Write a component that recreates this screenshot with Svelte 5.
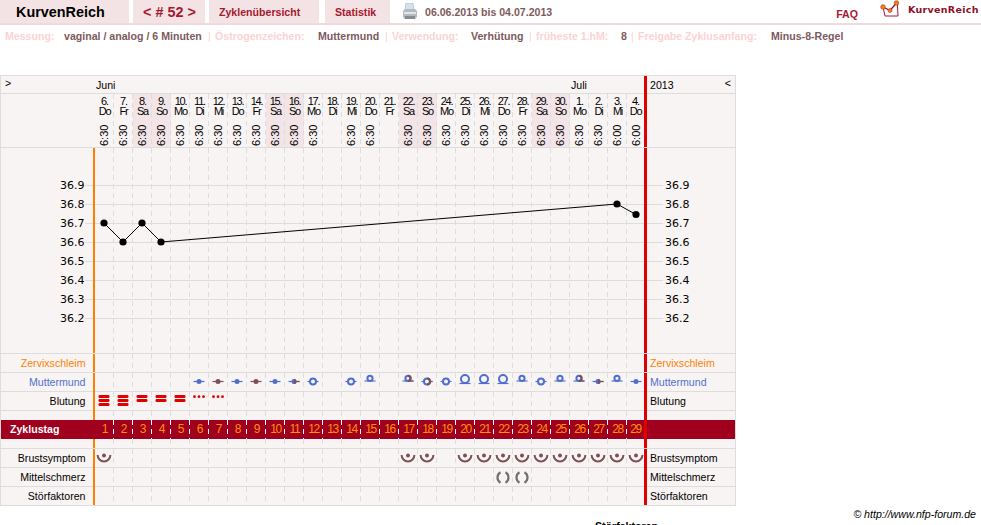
<script>
  const names = ['Do', 'Fr', 'Sa', 'So', 'Mo', 'Di', 'Mi'];
  const blood = { 1: 3, 2: 3, 3: 2, 4: 2, 5: 2, 6: 'dots', 7: 'dots' };
  const cervix = {
    6: ['dot', 0], 7: ['dot', 2], 8: ['dot', 0], 9: ['dot', 2], 10: ['dot', 0], 11: ['dot', 1], 12: ['low', 0],
    14: ['low', 0], 15: ['high', 0], 17: ['high', 1], 18: ['low', 1], 19: ['low', 0], 20: ['big', 0], 21: ['big', 0],
    22: ['big', 0], 23: ['high', 0], 24: ['low', 0], 25: ['high', 0], 26: ['high', 1], 27: ['dot', 1], 28: ['high', 0], 29: ['dot', 0]
  };
  const breast = [1, 17, 18, 20, 21, 22, 23, 24, 25, 26, 27, 28, 29];
  const pain = [22, 23];
  const noTime = [13, 16];
  const temps = [36.9, 36.8, 36.7, 36.6, 36.5, 36.4, 36.3, 36.2];
  const points = [[104, 223], [123, 242], [142, 223], [161, 242], [617, 204], [636, 214.5]];
  const settings = [
    { key: 'Messung:', keyWidth: 59, val: 'vaginal / analog / 6 Minuten', valWidth: 144 },
    { key: 'Östrogenzeichen:', keyWidth: 103, val: 'Muttermund', valWidth: 67 },
    { key: 'Verwendung:', keyWidth: 79, val: 'Verhütung', valWidth: 58 },
    { key: 'früheste 1.hM:', keyWidth: 85, val: '8', valWidth: 10 },
    { key: 'Freigabe Zyklusanfang:', keyWidth: 133, val: 'Minus-8-Regel', valWidth: 80 }
  ];

  const days = Array.from({ length: 29 }, (_, i) => {
    const date = i < 25 ? i + 6 : i - 24;
    return {
      n: i + 1,
      date,
      name: names[i % 7],
      weekend: i % 7 === 2 || i % 7 === 3,
      time: noTime.includes(i + 1) ? '' : i > 26 ? '6:00' : '6:30'
    };
  });
</script>

{#snippet cervixMark(kind, tone)}
  {@const cy = kind === 'dot' || kind === 'low' ? 8.5 : kind === 'big' ? 6 : 5.3}
  {@const ly = kind === 'dot' || kind === 'low' ? 8.5 : kind === 'big' ? 10.5 : 8}
  {@const r = kind === 'big' ? 4 : kind === 'low' ? 3 : 2.6}
  <svg class="mark" viewBox="0 0 19 19">
    <line x1="3.5" x2="14.5" y1={ly} y2={ly} class={tone === 2 ? 'ln brown' : 'ln blue'} />
    {#if tone === 1}
      <line x1="9" x2="14.5" y1={ly} y2={ly} class="ln brown" />
    {/if}
    {#if kind === 'dot'}
      <circle cx="9" cy={cy} r="2.5" class={tone === 2 ? 'solid brown' : 'solid blue'} />
    {:else}
      <circle cx="9" {cy} {r} class="ring" />
    {/if}
    {#if tone === 1}
      {#if kind === 'dot'}
        <path d="M9 6a2.5 2.5 0 0 1 0 5z" class="solid brown" />
      {:else}
        <path d="M9 {cy - r}a{r} {r} 0 0 1 0 {r * 2}" class="half" />
      {/if}
    {/if}
  </svg>
{/snippet}

<div class="page">
  <nav class="nav">
    <div class="tab title">KurvenReich</div>
    <div class="tab cycle">&lt; # 52 &gt;</div>
    <div class="tab overview">Zyklenübersicht</div>
    <div class="tab stats">Statistik</div>
    <svg class="printer" viewBox="0 0 14 17">
      <path d="M3 0h7l1 7H2z" fill="#d3e2ee" stroke="#9db2c2" stroke-width=".6" />
      <path d="M0 8l2-2h10l2 2v6l-2 2H2l-2-2z" fill="#b4babe" />
      <path d="M1 9h12v2H1z" fill="#e2e5e7" />
      <path d="M2 13h10v3H2z" fill="#868d91" />
    </svg>
    <span class="range">06.06.2013 bis 04.07.2013</span>
    <span class="faq">FAQ</span>
    <div class="brand">
      <svg class="logo" viewBox="0 0 22 20">
        <path d="M3 7l2 9h13l-.6-12" fill="none" stroke="#b0153a" stroke-width="1" />
        <path d="M3 7l7 3.5L16.500 3" fill="none" stroke="#8f0f2a" stroke-width="1.300" />
        <circle cx="3" cy="7" r="2.300" fill="#f0850a" stroke="#a5302a" stroke-width=".6" />
        <circle cx="10" cy="10.500" r="2" fill="#f0850a" stroke="#a5302a" stroke-width=".6" />
        <circle cx="16.500" cy="3" r="2.300" fill="#f0850a" stroke="#a5302a" stroke-width=".6" />
      </svg>
      <span>KurvenReich</span>
    </div>
  </nav>

  <div class="meta">
    {#each settings as s, i}
      <span class="key" style="width: {s.keyWidth}px">{s.key}</span>
      <span class="val" style="width: {s.valWidth}px">{s.val}</span>
      {#if i < settings.length - 1}<span class="sep">|</span>{/if}
    {/each}
  </div>

  <div class="chart">
    <div class="row months">
      <div class="label toggle">&gt;</div>
      <div class="month-names"><span>Juni</span><span>Juli</span></div>
      <div class="label side year"><span>2013</span><span class="toggle-r">&lt;</span></div>
    </div>

    <div class="row dates">
      <div class="label"></div>
      <div class="cells">
        {#each days as d}
          <div class="cell date-cell" class:weekend={d.weekend}>
            <div class="day">{d.date}.<br />{d.name}</div>
            {#if d.time}<div class="time">{d.time}</div>{/if}
          </div>
        {/each}
      </div>
      <div class="label side"></div>
    </div>

    <div class="row plot">
      <svg width="734" height="205" viewBox="1 148 734 205">
        {#each temps as t, i}
          <line x1="85" x2="663" y1={185.5 + i * 19} y2={185.5 + i * 19} class="grid" />
          <text x="60" y={188.7 + i * 19}>{t}</text>
          <text x="665" y={188.7 + i * 19}>{t}</text>
        {/each}
        {#each days.slice(0, 28) as d, i}
          <line x1={113.5 + i * 19} x2={113.5 + i * 19} y1="148" y2="353" class="grid dash" />
        {/each}
        <rect x="93" y="148" width="2" height="205" fill="#ff8000" />
        <rect x="644" y="148" width="3" height="205" fill="#e00000" />
        <polyline points={points.map((p) => p.join(',')).join(' ')} fill="none" stroke="#000" stroke-width="1" />
        {#each points as p}
          <circle cx={p[0]} cy={p[1]} r="3.600" fill="#000" />
        {/each}
      </svg>
    </div>

    <div class="row">
      <div class="label mucus">Zervixschleim</div>
      <div class="cells">{#each days as d}<div class="cell"></div>{/each}</div>
      <div class="label side mucus">Zervixschleim</div>
    </div>

    <div class="row">
      <div class="label mouth">Muttermund</div>
      <div class="cells">
        {#each days as d}
          <div class="cell">
            {#if cervix[d.n]}{@render cervixMark(cervix[d.n][0], cervix[d.n][1])}{/if}
          </div>
        {/each}
      </div>
      <div class="label side mouth">Muttermund</div>
    </div>

    <div class="row">
      <div class="label">Blutung</div>
      <div class="cells">
        {#each days as d}
          <div class="cell">
            {#if blood[d.n] === 'dots'}
              <svg class="mark" viewBox="0 0 19 19">
                {#each [4.500, 9, 13.500] as x}<circle cx={x} cy="4.700" r="1.400" fill="#e00000" />{/each}
              </svg>
            {:else if blood[d.n]}
              <svg class="mark" viewBox="0 0 19 19">
                {#each Array(blood[d.n]) as _, i}
                  <rect x="3.500" y={3 + i * 4} width="11" height="3" rx="1.200" fill="#e00000" />
                {/each}
              </svg>
            {/if}
          </div>
        {/each}
      </div>
      <div class="label side">Blutung</div>
    </div>

    <div class="row spacer open">
      <div class="label"></div>
      <div class="cells">{#each days as d}<div class="cell"></div>{/each}</div>
      <div class="label side"></div>
    </div>

    <div class="row band">
      <div class="label">Zyklustag</div>
      <div class="cells">{#each days as d}<div class="cell">{d.n}</div>{/each}</div>
      <div class="label side"></div>
    </div>

    <div class="row spacer after">
      <div class="label"></div>
      <div class="cells">{#each days as d}<div class="cell"></div>{/each}</div>
      <div class="label side"></div>
    </div>

    <div class="row">
      <div class="label">Brustsymptom</div>
      <div class="cells">
        {#each days as d}
          <div class="cell">
            {#if breast.includes(d.n)}
              <svg class="mark" viewBox="0 0 19 19">
                <circle cx="9" cy="6.500" r="2" fill="#7d5056" />
                <path d="M2.600 6a6.400 6.400 0 0 0 12.800 0" fill="none" stroke="#7d5056" stroke-width="2" />
              </svg>
            {/if}
          </div>
        {/each}
      </div>
      <div class="label side">Brustsymptom</div>
    </div>

    <div class="row">
      <div class="label">Mittelschmerz</div>
      <div class="cells">
        {#each days as d}
          <div class="cell">
            {#if pain.includes(d.n)}
              <svg class="mark" viewBox="0 0 19 19">
                <path d="M6.500 4.300A6 6 0 0 0 6.500 14.700M11.500 4.300A6 6 0 0 1 11.500 14.700" fill="none" stroke="#707070" stroke-width="2.200" />
              </svg>
            {/if}
          </div>
        {/each}
      </div>
      <div class="label side">Mittelschmerz</div>
    </div>

    <div class="row">
      <div class="label">Störfaktoren</div>
      <div class="cells">{#each days as d}<div class="cell"></div>{/each}</div>
      <div class="label side">Störfaktoren</div>
    </div>
  </div>

  <div class="credit">© http://www.nfp-forum.de</div>
  <div class="legend">Störfaktoren</div>
</div>

<style>
  :global(body) {
    margin: 0;
    background: #fff;
  }
  .page {
    height: 525px;
    overflow: hidden;
    position: relative;
    font-family: 'Liberation Sans', Arial, sans-serif;
    font-size: 10.6px;
    color: #000;
  }

  .nav {
    display: flex;
    align-items: center;
    height: 23px;
    border-bottom: 2px solid #f2d9dc;
  }
  .tab {
    height: 23px;
    line-height: 24px;
    background: #f4e3e5;
    color: #a6182f;
    font-weight: bold;
    white-space: nowrap;
  }
  .title {
    width: 113px;
    padding-left: 16px;
    color: #000;
    font-size: 14.4px;
  }
  .cycle {
    width: 62px;
    padding-left: 10px;
    margin-left: 4px;
    font-size: 14.4px;
  }
  .overview {
    width: 100px;
    padding-left: 10px;
    margin-left: 4px;
  }
  .stats {
    width: 55px;
    padding-left: 10px;
    margin-left: 6px;
  }
  .printer {
    width: 14px;
    height: 17px;
    margin-left: 13px;
  }
  .range {
    margin-left: 8px;
    font-weight: bold;
    color: #7d5a5e;
  }
  .faq {
    margin-left: auto;
    padding-top: 5px;
    font-weight: bold;
    color: #a6182f;
  }
  .brand {
    display: flex;
    align-items: center;
    gap: 6px;
    width: 100px;
    margin-left: 23px;
    padding-bottom: 4px;
    font-family: 'DejaVu Sans', sans-serif;
    font-size: 9.5px;
    font-weight: bold;
    letter-spacing: 0.3px;
    color: #8f0f2a;
  }
  .logo {
    width: 22px;
    height: 20px;
    margin-left: -1px;
    flex: none;
  }

  .meta {
    display: flex;
    height: 50px;
    line-height: 22px;
    padding-left: 5px;
    font-weight: bold;
    white-space: nowrap;
  }
  .key {
    flex: none;
    color: #fbd3d3;
  }
  .val {
    flex: none;
    color: #7d5a5e;
  }
  .sep {
    flex: none;
    width: 7px;
    color: #fbd3d3;
    font-weight: normal;
  }

  .chart {
    width: 736px;
    box-sizing: border-box;
    border: 1px solid #ddd;
    border-bottom: 0;
    background: #f9f4f4;
  }
  .row {
    display: grid;
    grid-template-columns: 92px 551px 91px;
    height: 19px;
    box-sizing: border-box;
    border-bottom: 1px solid #ddd;
    line-height: 18px;
  }
  .label {
    padding-right: 7.500px;
    text-align: right;
    white-space: nowrap;
  }
  .side {
    padding: 0 0 0 3px;
    text-align: left;
    border-left: 3px solid #e00000;
  }
  .mucus {
    color: #ff8000;
  }
  .mouth {
    color: #5070d0;
  }
  .cells {
    display: grid;
    grid-template-columns: repeat(28, 19px) 17px;
    border-left: 2px solid #ff8000;
    height: 100%;
  }
  .cell {
    --dash: #ddd;
    height: 100%;
    text-align: center;
    background: repeating-linear-gradient(to bottom, var(--dash) 0 5px, transparent 5px 9px) right / 1px 100% no-repeat;
  }
  .cell:last-child {
    background: none;
  }
  .mark {
    display: block;
    width: 19px;
    height: 19px;
    overflow: visible;
  }
  .ln {
    stroke-width: 1.2;
  }
  .ln.blue {
    stroke: #4f6fd0;
  }
  .ln.brown {
    stroke: #7d5056;
  }
  .solid.blue {
    fill: #4f6fd0;
  }
  .solid.brown {
    fill: #7d5056;
  }
  .ring {
    fill: #f9f4f4;
    stroke: #4f6fd0;
    stroke-width: 2;
  }
  .half {
    fill: none;
    stroke: #7d5056;
    stroke-width: 2;
  }

  .months {
    position: relative;
    height: 18px;
    grid-template-columns: 92px 551px 91px;
  }
  .toggle {
    padding: 0 0 0 4px;
    text-align: left;
    line-height: 14px;
  }
  .toggle-r {
    line-height: 14px;
  }
  .month-names {
    position: relative;
    padding-left: 3px;
  }
  .month-names span:last-child {
    position: absolute;
    left: 478px;
  }
  .year {
    display: flex;
    justify-content: space-between;
    padding-right: 4px;
  }

  .dates {
    height: 54px;
  }
  .dates .cells {
    border-left-color: transparent;
  }
  .date-cell {
    font-size: 11px;
    letter-spacing: -1.2px;
  }
  .weekend {
    background-color: #f3e5e7;
  }
  .day {
    padding-top: 2px;
    line-height: 10px;
  }
  .time {
    margin: 8px auto 0;
    writing-mode: vertical-rl;
    transform: rotate(180deg);
    letter-spacing: 0;
    line-height: 19px;
    height: 22px;
    font-size: 11px;
  }

  .plot {
    display: block;
    height: 206px;
  }
  .plot svg {
    display: block;
  }
  .plot text {
    font-family: 'DejaVu Sans', sans-serif;
    font-size: 11px;
    fill: #000;
  }
  .grid {
    stroke: #ddd;
    stroke-width: 1;
  }
  .dash {
    stroke-dasharray: 5 4;
  }

  .spacer.open {
    height: 9px;
    border-bottom: 0;
  }
  .spacer.after {
    height: 10px;
  }
  .band {
    background: #a0001e;
    border-bottom: 0;
    line-height: 19px;
  }
  .band .label {
    padding-left: 9px;
    text-align: left;
    color: #fff;
    font-weight: bold;
  }
  .band .side {
    padding: 0;
  }
  .band .cells {
    border-left-color: #a0001e;
  }
  .band .cell {
    --dash: #fff;
    color: #ff9000;
    font-size: 12px;
    letter-spacing: -1.300px;
  }

  .credit {
    margin-top: 2px;
    padding-right: 5px;
    text-align: right;
    font-style: italic;
    line-height: 13px;
  }
  .legend {
    margin: -1px 0 0 595px;
    font-weight: bold;
  }
</style>
